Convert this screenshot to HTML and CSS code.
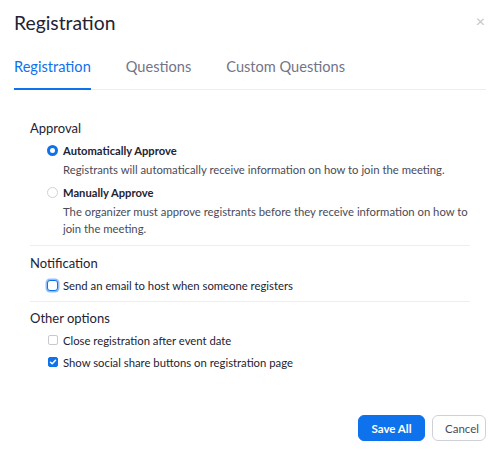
FILE: index.html
```html
<!DOCTYPE html>
<html lang="en">
<head>
    <meta charset="UTF-8">
    <title>Registration</title>
    <link rel="stylesheet" href="styles.css">
</head>
<body>
    <div class="dialog">
        <div class="dialog-header">
            <h1 class="dialog-title">Registration</h1>
            <span class="close-button">&times;</span>
        </div>
        <div class="tabs">
            <div class="tab active">Registration</div>
            <div class="tab">Questions</div>
            <div class="tab">Custom Questions</div>
        </div>

        <div class="dialog-body">
            <div class="section">
                <div class="section-title">Approval</div>
                <label class="option">
                    <span class="radio checked"></span>
                    <span class="option-label">Automatically Approve</span>
                </label>
                <div class="option-desc">Registrants will automatically receive information on how to join the meeting.</div>
                <label class="option">
                    <span class="radio"></span>
                    <span class="option-label">Manually Approve</span>
                </label>
                <div class="option-desc">The organizer must approve registrants before they receive information on how to join the meeting.</div>
            </div>

            <div class="section">
                <div class="section-title">Notification</div>
                <label class="option">
                    <span class="checkbox focused"></span>
                    <span class="option-text">Send an email to host when someone registers</span>
                </label>
            </div>

            <div class="section">
                <div class="section-title">Other options</div>
                <label class="option">
                    <span class="checkbox"></span>
                    <span class="option-text">Close registration after event date</span>
                </label>
                <label class="option">
                    <span class="checkbox checked">
                        <svg width="8" height="8" viewBox="0 0 8 8" fill="none" stroke="white" stroke-width="1.5" stroke-linecap="round" stroke-linejoin="round">
                            <polyline points="1.5 4.2 3.2 5.8 6.5 2.2"></polyline>
                        </svg>
                    </span>
                    <span class="option-text">Show social share buttons on registration page</span>
                </label>
            </div>
        </div>

        <div class="dialog-footer">
            <button class="btn btn-primary">Save All</button>
            <button class="btn btn-default">Cancel</button>
        </div>
    </div>
</body>
</html>
```

FILE: styles.css
```css
:root {
    --blue: #0e72ed;
    --text: #232333;
    --muted: #747487;
    --desc: #4a4a57;
    --line: #ededf4;
}

* {
    margin: 0;
    padding: 0;
    box-sizing: border-box;
}

body {
    font-family: 'Lato', 'Open Sans', sans-serif;
    background: white;
    color: var(--text);
    width: 500px;
    height: 450px;
}

.dialog {
    padding: 9px 14px 0 14px;
}

.dialog-header {
    display: flex;
    justify-content: space-between;
    align-items: center;
}

.dialog-title {
    font-size: 19.3px;
    font-weight: 400;
    line-height: 28px;
}

.close-button {
    color: #c4c4cc;
    font-size: 16px;
    margin-right: 1px;
    margin-top: -6px;
}

.tabs {
    display: flex;
    gap: 35px;
    margin-top: 20px;
    border-bottom: 1px solid var(--line);
}

.tab {
    font-size: 14.6px;
    font-weight: 400;
    color: var(--muted);
    padding-bottom: 11px;
    line-height: 20px;
    border-bottom: 2px solid transparent;
    margin-bottom: -1px;
}

.tab.active {
    color: var(--blue);
    border-bottom-color: var(--blue);
}

.dialog-body {
    padding: 28px 16px 0 16px;
}

.section {
    border-top: 1px solid var(--line);
    padding: 7px 0 5px;
}

.section:first-child {
    border-top: none;
    padding: 0 0 5px;
}

.section:last-child {
    padding-top: 6px;
}

.section-title {
    font-size: 13px;
    line-height: 20px;
    margin-bottom: 1px;
}

.option {
    display: flex;
    align-items: center;
    gap: 5px;
    padding-left: 18px;
    height: 22px;
    font-size: 11.3px;
}

.option-label {
    font-weight: 700;
    font-size: 11.2px;
}

.option-desc {
    padding-left: 33px;
    font-size: 11.3px;
    line-height: 17px;
    color: var(--desc);
    margin-bottom: 3px;
}

.radio {
    width: 11px;
    height: 11px;
    border-radius: 50%;
    border: 1px solid #cfcfd6;
    background: white;
    margin-left: -1px;
}

.radio.checked {
    border: 3.5px solid var(--blue);
}

.checkbox {
    width: 10px;
    height: 10px;
    border-radius: 2px;
    border: 1px solid #c8c8d0;
    background: white;
    display: flex;
    align-items: center;
    justify-content: center;
}

.checkbox.focused {
    width: 11px;
    height: 11px;
    border-radius: 3px;
    margin-left: -1px;
    border-color: var(--blue);
    box-shadow: 0 0 0 1.5px rgba(14, 114, 237, 0.45);
}

.checkbox.checked {
    background: var(--blue);
    border-color: var(--blue);
}

.dialog-footer {
    display: flex;
    justify-content: flex-end;
    gap: 7px;
    margin-top: 37px;
}

.btn {
    font-family: inherit;
    font-size: 11.5px;
    height: 26px;
    border-radius: 6px;
    padding: 0 12px;
}

.btn-primary {
    background: var(--blue);
    color: white;
    border: 1px solid var(--blue);
    font-weight: 700;
    width: 67px;
}

.btn-default {
    background: white;
    color: #4a4a57;
    border: 1px solid #d0d0d8;
    width: 54px;
}
```
